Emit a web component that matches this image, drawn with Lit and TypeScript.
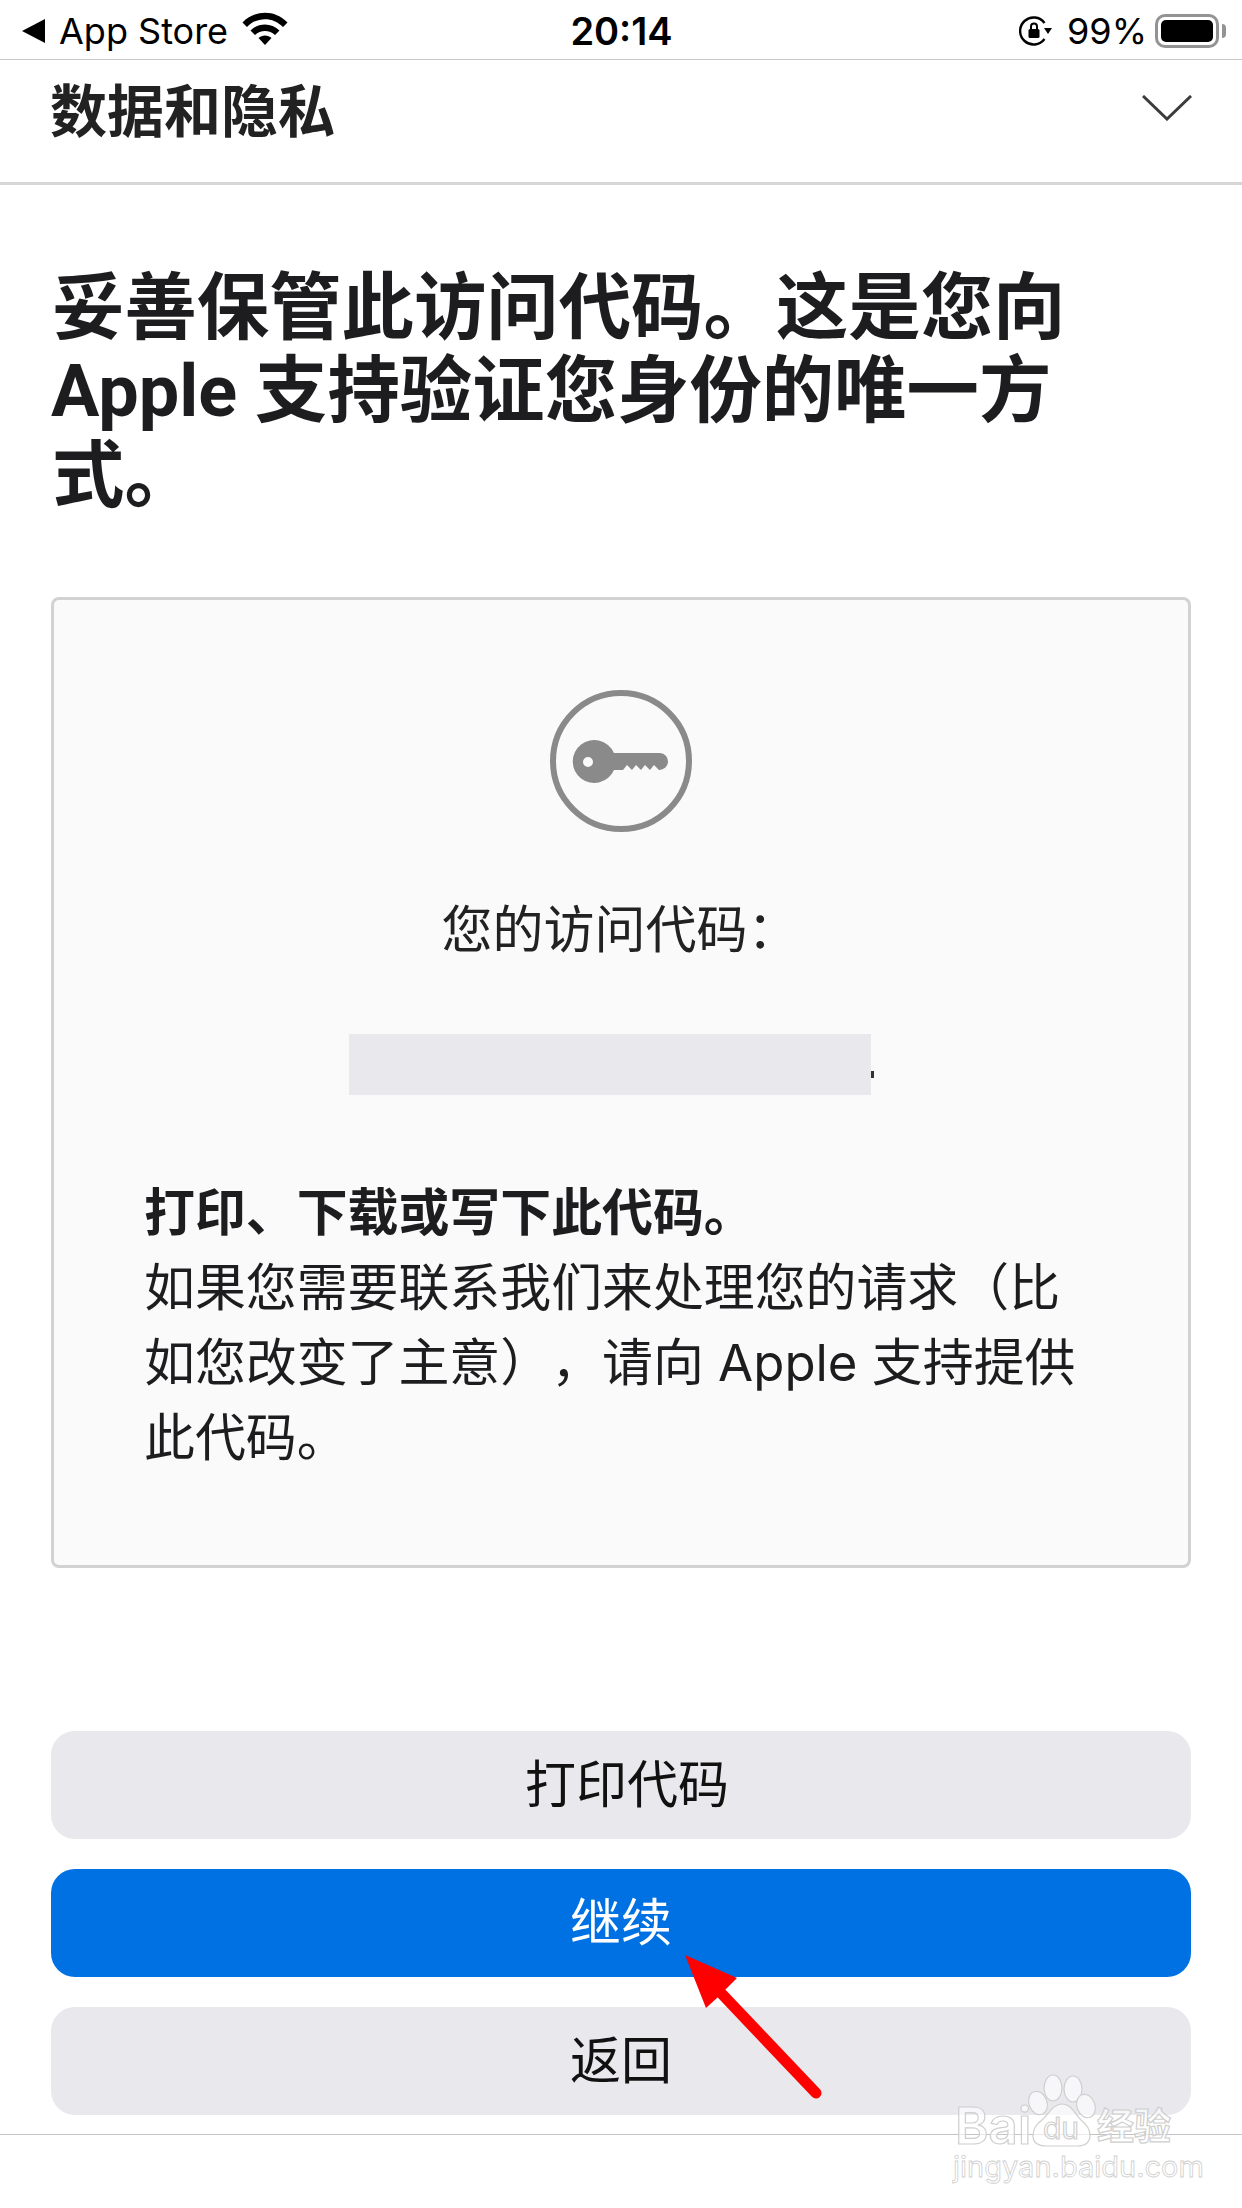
import { LitElement, html, css, svg } from "lit";
import { customElement } from "lit/decorators.js";

@customElement("app-root")
export class AppRoot extends LitElement {
  render() {
    return html`
      <div class="page">
        <div class="status">
          <div class="status-left">
            <svg width="23" height="24" viewBox="0 0 23 24"><path d="M0 12 23 0v24z" fill="#000" /></svg>
            <span class="carrier">App Store</span>
            <svg class="wifi" width="46" height="33" viewBox="0 0 46 33">
              <path d="M0.500 10.500C13 -2.500 33 -2.500 45.500 10.500l-4.500 4.500C31 4.500 15 4.500 5 15z" fill="#000" />
              <path d="M8.500 18.500c8-8 21-8 29 0l-4.500 4.500c-5.500-5.500-14.500-5.500-20 0z" fill="#000" />
              <path d="M16.500 26c3.500-3.500 9.500-3.500 13 0L23 33z" fill="#000" />
            </svg>
          </div>
          <div class="time">20:14</div>
          <div class="status-right">
            <svg width="33" height="30" viewBox="0 0 33 30">
              <path d="M25.500 7A13.500 13.500 0 1 0 25.500 23" fill="none" stroke="#000" stroke-width="2.400" />
              <path d="M25 12h8l-4 6z" fill="#000" />
              <rect x="9.500" y="13" width="11" height="9" rx="1.500" fill="#000" />
              <path d="M12 13v-2.500a3 3 0 0 1 6 0V13" fill="none" stroke="#000" stroke-width="2" />
            </svg>
            <span class="pct">99%</span>
            <div class="battery"><div class="battery-fill"></div></div>
            <div class="nub"></div>
          </div>
        </div>
        <div class="section">
          <div class="section-title">数据和隐私</div>
          <svg width="50" height="26" viewBox="0 0 50 26">
            <path d="M1 1 25 24 49 1" fill="none" stroke="#3c3c3c" stroke-width="3" />
          </svg>
        </div>
        <div class="content">
          <h1>妥善保管此访问代码。这是您向<br /><span class="latin">Apple </span>支持验证您身份的唯一方<br />式。</h1>
          <div class="card">
            <svg class="key" width="142" height="142" viewBox="0 0 142 142">
              <circle cx="71" cy="71" r="68" fill="none" stroke="#8a8a8a" stroke-width="6" />
              <path fill="#8a8a8a" fill-rule="evenodd" d="M64 63A21.500 21.500 0 1 0 64 80H73L77 75 82 80 86 75 91 80 95 75 100 80 104 75 109 80A8.500 8.500 0 0 0 110 63ZM38 67A5 5 0 1 0 38 77 5 5 0 1 0 38 67Z" />
            </svg>
            <div class="label">您的访问代码：</div>
            <div class="code"><div class="redact"></div><div class="dot"></div></div>
            <div class="note">
              <b>打印、下载或写下此代码。</b><br />如果您需要联系我们来处理您的请求（比<br />如您改变了主意），请向 Apple 支持提供<br />此代码。
            </div>
          </div>
          <div class="buttons">
            <div class="btn print">打印代码</div>
            <div class="btn primary">继续</div>
            <div class="btn">返回</div>
          </div>
        </div>
        <div class="footer-line"></div>

        <svg class="arrow" width="150" height="155" viewBox="0 0 150 155">
          <path d="M5 5 57 28 45 40 38 47 26 58z" fill="#ff0000" />
          <path d="M41 43 136 143" fill="none" stroke="#ff0000" stroke-width="11" stroke-linecap="round" />
        </svg>

        <div class="mark">
          ${this.paw()}
          <span class="mark-bai">Bai</span>
          <span class="mark-du">du</span>
          <span class="mark-jy">经验</span>
          <span class="mark-sub">jingyan.baidu.com</span>
        </div>
      </div>
    `;
  }

  // baidu paw, coords relative to .mark
  paw() {
    return svg`<svg class="paw" width="240" height="100" viewBox="0 0 240 100" fill="#fff" fill-opacity="0.65" stroke="#cfcfcf" stroke-width="1.200">
      <ellipse cx="103" cy="28" rx="9" ry="13" /><ellipse cx="123" cy="29" rx="9" ry="13" />
      <ellipse cx="88" cy="43" rx="9" ry="12" transform="rotate(-20 88 43)" /><ellipse cx="136" cy="46" rx="9" ry="12" transform="rotate(-20 136 46)" />
      <path d="M112 44c-9 0-13 10-20 16-7 5-9 11-9 16 0 9 8 10 14 10h30c7 0 13-3 13-11 0-6-4-11-9-15-6-5-9-16-19-16z" />
    </svg>`;
  }

  static styles = css`
    :host {
      display: block;
      width: 1242px;
      font-family: "Inter", "Noto Sans CJK SC", sans-serif;
      text-spacing-trim: space-all;
    }
    .page {
      position: relative;
      width: 1242px;
      height: 2208px;
      overflow: hidden;
      background: #fff;
      color: #1d1d1f;
    }
    .status {
      box-sizing: border-box;
      height: 60px;
      display: grid;
      grid-template-columns: 1fr auto 1fr;
      align-items: center;
      padding: 2px 16px 0 22px;
      border-bottom: 1px solid #c8c8c8;
      color: #000;
    }
    .status-left {
      display: flex;
      align-items: center;
    }
    .carrier {
      font-size: 36px;
      margin-left: 14px;
    }
    .wifi {
      margin-left: 14px;
      margin-top: -4px;
    }
    .time {
      font-size: 38px;
      font-weight: 600;
      margin-right: 5px;
    }
    .status-right {
      display: flex;
      align-items: center;
      justify-content: flex-end;
    }
    .pct {
      font-size: 36px;
      margin: 0 8px 0 15px;
    }
    .battery {
      box-sizing: border-box;
      width: 64px;
      height: 34px;
      border: 3px solid #939393;
      border-radius: 10px;
      padding: 3px;
    }
    .battery-fill {
      height: 100%;
      background: #000;
      border-radius: 5px;
    }
    .nub {
      width: 4px;
      height: 14px;
      margin-left: 3px;
      background: #939393;
      border-radius: 0 4px 4px 0;
    }
    .section {
      box-sizing: border-box;
      height: 125px;
      display: flex;
      align-items: center;
      justify-content: space-between;
      padding: 0 50px 26px 50px;
      border-bottom: 3px solid #d6d6d6;
    }
    .section-title {
      font-size: 57px;
      line-height: 70px;
      font-weight: 700;
      color: #222;
      margin-top: 7px;
    }
    .content {
      padding: 80px 51px 0 51px;
    }
    h1 {
      margin: 0 0 0 1px;
      font-size: 72.4px;
      line-height: 83px;
      font-weight: 700;
      color: #1d1d1f;
    }
    .latin {
      font-family: "Roboto", sans-serif;
      font-size: 72px;
      margin-left: -1px;
    }
    .card {
      box-sizing: border-box;
      height: 971px;
      margin-top: 81px;
      border: 3px solid #d2d2d2;
      border-radius: 8px;
      background: #fafafa;
      display: flex;
      flex-direction: column;
      align-items: center;
      padding-top: 90px;
    }
    .key {
      display: block;
    }
    .label {
      margin-top: 63px;
      margin-right: 2px;
      font-size: 51px;
      line-height: 70px;
      color: #222;
    }
    .code {
      margin-top: 69px;
      display: flex;
      align-items: flex-end;
      height: 61px;
      align-self: flex-start;
      margin-left: 295px;
    }
    .redact {
      width: 522px;
      height: 61px;
      background: #e9e8ed;
    }
    .dot {
      width: 3px;
      height: 7px;
      margin-bottom: 17px;
      background: #333;
    }
    .note {
      align-self: flex-start;
      margin: 80px 0 0 90px;
      font-size: 50.9px;
      line-height: 75px;
      white-space: nowrap;
      color: #1d1d1f;
    }
    .note b {
      font-weight: 700;
    }
    .buttons {
      margin-top: 163px;
      display: flex;
      flex-direction: column;
      gap: 30px;
    }
    .btn {
      box-sizing: border-box;
      height: 108px;
      border-radius: 24px;
      background: #e8e8ed;
      color: #111;
      font-size: 51px;
      padding-bottom: 9px;
      display: flex;
      align-items: center;
      justify-content: center;
    }
    .btn.print {
      padding-left: 12px;
    }
    .btn.primary {
      background: #0071e3;
      color: #fff;
    }
    .footer-line {
      margin-top: 19px;
      height: 1px;
      background: #c4c4c4;
    }
    .arrow {
      position: absolute;
      left: 680px;
      top: 1950px;
    }
    .mark {
      position: absolute;
      left: 950px;
      top: 2060px;
      width: 240px;
      height: 125px;
      color: rgba(255, 255, 255, 0.65);
      -webkit-text-stroke: 1.2px #cfcfcf;
      white-space: nowrap;
    }
    .paw {
      position: absolute;
      left: 0;
      top: 0;
    }
    .mark span {
      position: absolute;
    }
    .mark-bai {
      left: 5px;
      top: 42px;
      font-size: 51px;
      line-height: 48px;
      font-weight: 600;
    }
    .mark-du {
      left: 93px;
      top: 50px;
      font-size: 30px;
      line-height: 36px;
    }
    .mark-jy {
      left: 147px;
      top: 43px;
      font-size: 37px;
      line-height: 48px;
      font-weight: 700;
    }
    .mark-sub {
      left: 3px;
      top: 92px;
      font-size: 29px;
      line-height: 30px;
      -webkit-text-stroke-width: 0.8px;
    }
  `;
}
